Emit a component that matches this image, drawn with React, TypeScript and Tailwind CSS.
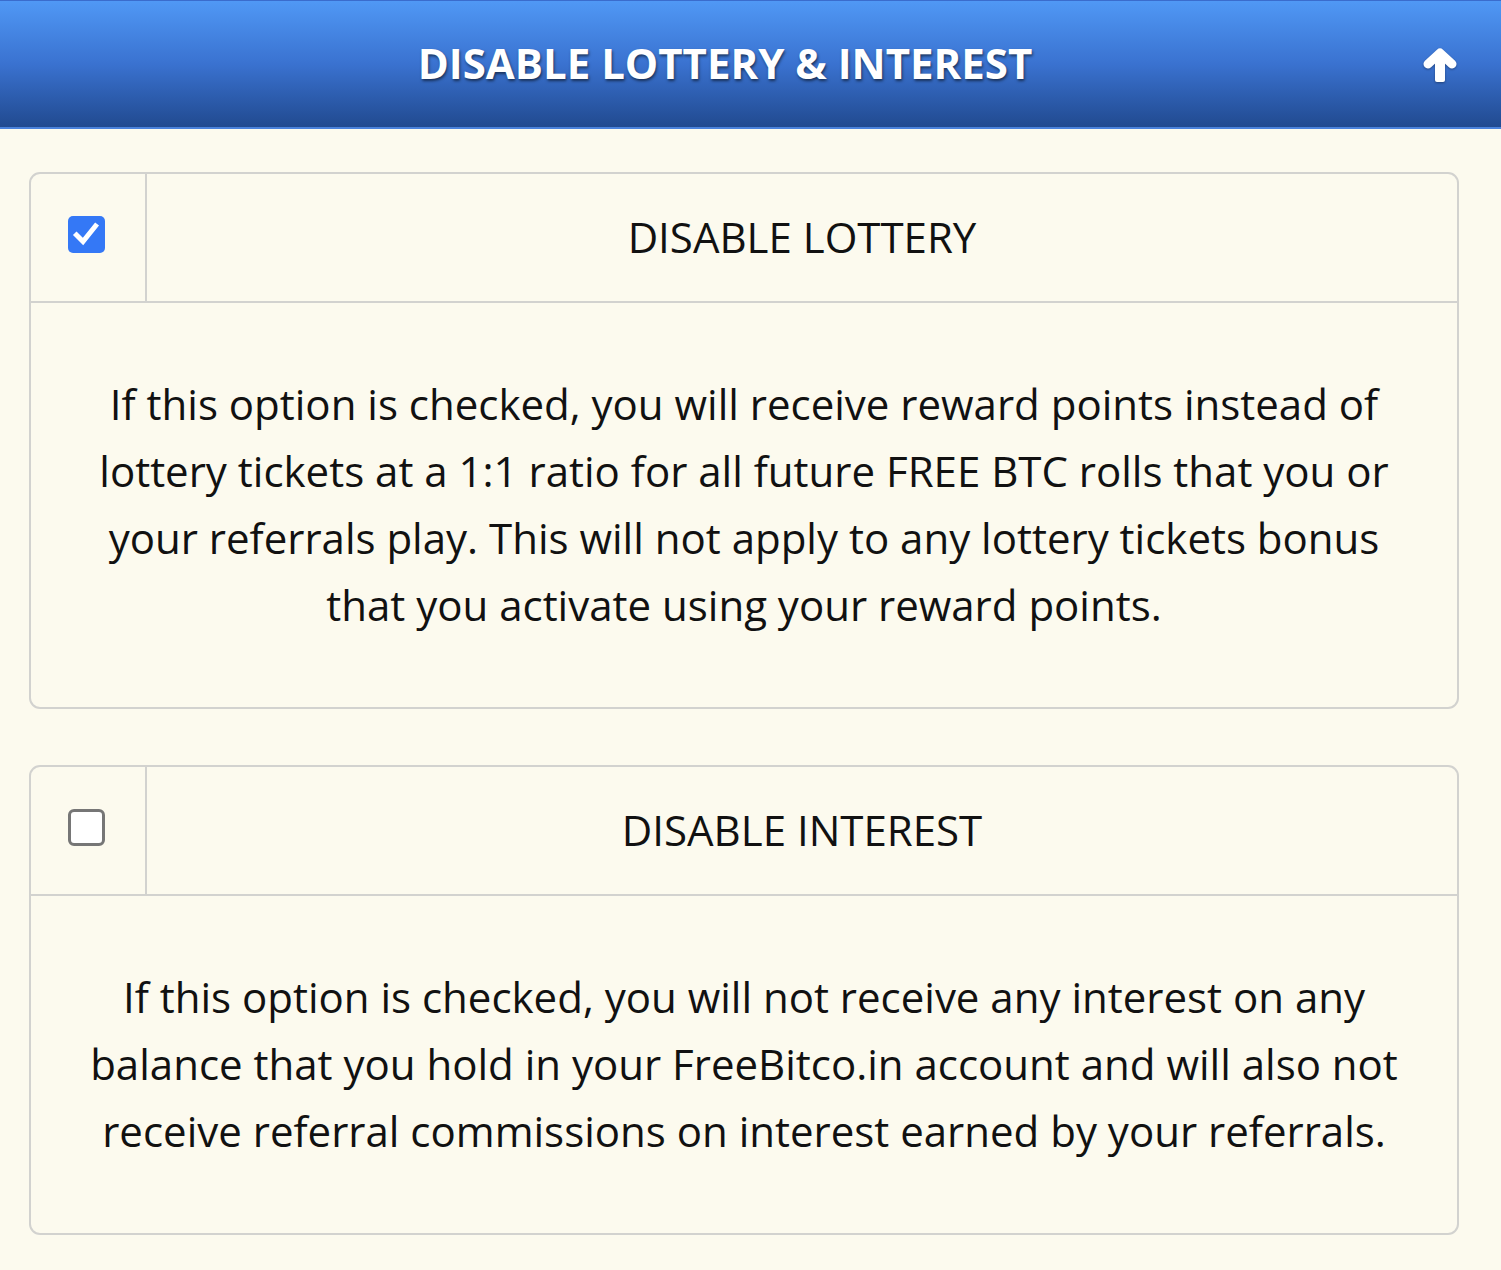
import { useState } from 'react';

const font = { fontFamily: '"Open Sans", "Noto Sans", sans-serif' };

function ArrowUp() {
  return (
    <svg width="40" height="40" viewBox="0 0 40 40" className="drop-shadow-[0_1px_1px_rgba(0,0,0,0.35)]">
      <polyline
        points="8,20 20,9 32,20"
        fill="none"
        stroke="#fff"
        strokeWidth="9"
        strokeLinecap="round"
        strokeLinejoin="round"
      />
      <rect x="15" y="10" width="10" height="28" rx="2" fill="#fff" />
    </svg>
  );
}

function Checkbox({ checked, onChange }: { checked: boolean; onChange: () => void }) {
  return (
    <button
      type="button"
      onClick={onChange}
      className={
        checked
          ? 'w-[37px] h-[37px] rounded-[5px] bg-[#3478f6]'
          : 'w-[37px] h-[37px] rounded-[6px] bg-white border-[3px] border-[#767676]'
      }
    >
      {checked && (
        <svg width="37" height="37" viewBox="0 0 37 37" className="block">
          <polyline
            points="8.5,19 15,25.5 27.5,10"
            fill="none"
            stroke="#fff"
            strokeWidth="5"
            strokeLinecap="square"
          />
        </svg>
      )}
    </button>
  );
}

function OptionCard({
  title,
  text,
  checked,
  onToggle,
}: {
  title: string;
  text: string;
  checked: boolean;
  onToggle: () => void;
}) {
  return (
    <div className="w-[1430px] border-2 border-[#d2d2cf] rounded-[11px]">
      <div className="flex h-[129px] border-b-2 border-[#d2d2cf]">
        <div className="w-[116px] shrink-0 border-r-2 border-[#d2d2cf] flex items-center justify-center pb-[7px] pr-[3px]">
          <Checkbox checked={checked} onChange={onToggle} />
        </div>
        <div className="flex-1 flex items-center justify-center pb-[3px] text-[42px] text-[#111]">{title}</div>
      </div>
      <div className="px-[58px] pt-[67px] pb-[69px] text-center text-[42px] leading-[67px] text-[#111]">{text}</div>
    </div>
  );
}

export default function App() {
  const [lottery, setLottery] = useState(true);
  const [interest, setInterest] = useState(false);

  return (
    <div className="min-h-[1270px] bg-[#fcfaee]" style={font}>
      <div className="relative h-[129px] border-t border-[#3a6ccd] border-b-2 border-b-[#4a82dc] bg-gradient-to-b from-[#5098f5] via-[#3a72d0] to-[#214a90] flex items-center">
        <h1 className="w-full pr-[51px] pb-[3px] text-center text-[42px] font-bold text-white [text-shadow:1px_2px_3px_rgba(0,0,0,0.55)]">
          DISABLE LOTTERY &amp; INTEREST
        </h1>
        <div className="absolute right-[41px] top-[43px]">
          <ArrowUp />
        </div>
      </div>

      <div className="pl-[29px] pt-[43px] flex flex-col gap-[56px] pb-[34px]">
        <OptionCard
          title="DISABLE LOTTERY"
          checked={lottery}
          onToggle={() => setLottery(!lottery)}
          text="If this option is checked, you will receive reward points instead of lottery tickets at a 1:1 ratio for all future FREE BTC rolls that you or your referrals play. This will not apply to any lottery tickets bonus that you activate using your reward points."
        />
        <OptionCard
          title="DISABLE INTEREST"
          checked={interest}
          onToggle={() => setInterest(!interest)}
          text="If this option is checked, you will not receive any interest on any balance that you hold in your FreeBitco.in account and will also not receive referral commissions on interest earned by your referrals."
        />
      </div>
    </div>
  );
}
